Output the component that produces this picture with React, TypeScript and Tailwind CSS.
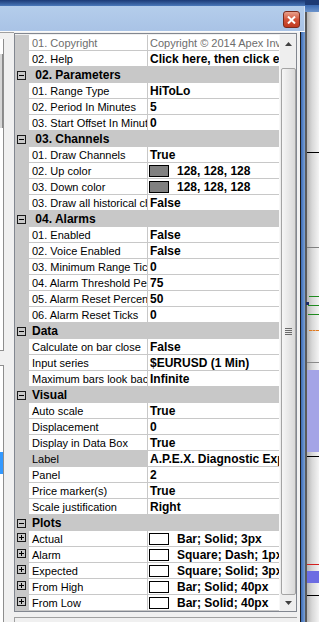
import React from 'react';

type Row =
  | { kind: 'cat'; label: string }
  | {
      kind: 'prop';
      name: string;
      value: string;
      readOnly?: boolean;
      swatch?: string;
      plus?: boolean;
      selected?: boolean;
    };

const rows: Row[] = [
  { kind: 'prop', name: '01. Copyright', value: 'Copyright © 2014 Apex Investing', readOnly: true },
  { kind: 'prop', name: '02. Help', value: 'Click here, then click ellipsis' },
  { kind: 'cat', label: ' 02. Parameters' },
  { kind: 'prop', name: '01. Range Type', value: 'HiToLo' },
  { kind: 'prop', name: '02. Period In Minutes', value: '5' },
  { kind: 'prop', name: '03. Start Offset In Minutes', value: '0' },
  { kind: 'cat', label: ' 03. Channels' },
  { kind: 'prop', name: '01. Draw Channels', value: 'True' },
  { kind: 'prop', name: '02. Up color', value: '128, 128, 128', swatch: '#808080' },
  { kind: 'prop', name: '03. Down color', value: '128, 128, 128', swatch: '#808080' },
  { kind: 'prop', name: '03. Draw all historical channels', value: 'False' },
  { kind: 'cat', label: ' 04. Alarms' },
  { kind: 'prop', name: '01. Enabled', value: 'False' },
  { kind: 'prop', name: '02. Voice Enabled', value: 'False' },
  { kind: 'prop', name: '03. Minimum Range Ticks', value: '0' },
  { kind: 'prop', name: '04. Alarm Threshold Percent', value: '75' },
  { kind: 'prop', name: '05. Alarm Reset Percent', value: '50' },
  { kind: 'prop', name: '06. Alarm Reset Ticks', value: '0' },
  { kind: 'cat', label: 'Data' },
  { kind: 'prop', name: 'Calculate on bar close', value: 'False' },
  { kind: 'prop', name: 'Input series', value: '$EURUSD (1 Min)' },
  { kind: 'prop', name: 'Maximum bars look back', value: 'Infinite' },
  { kind: 'cat', label: 'Visual' },
  { kind: 'prop', name: 'Auto scale', value: 'True' },
  { kind: 'prop', name: 'Displacement', value: '0' },
  { kind: 'prop', name: 'Display in Data Box', value: 'True' },
  { kind: 'prop', name: 'Label', value: 'A.P.E.X. Diagnostic Expected Range', selected: true },
  { kind: 'prop', name: 'Panel', value: '2' },
  { kind: 'prop', name: 'Price marker(s)', value: 'True' },
  { kind: 'prop', name: 'Scale justification', value: 'Right' },
  { kind: 'cat', label: 'Plots' },
  { kind: 'prop', name: 'Actual', value: 'Bar; Solid; 3px', swatch: '#ffffff', plus: true },
  { kind: 'prop', name: 'Alarm', value: 'Square; Dash; 1px', swatch: '#ffffff', plus: true },
  { kind: 'prop', name: 'Expected', value: 'Square; Solid; 3px', swatch: '#ffffff', plus: true },
  { kind: 'prop', name: 'From High', value: 'Bar; Solid; 40px', swatch: '#ffffff', plus: true },
  { kind: 'prop', name: 'From Low', value: 'Bar; Solid; 40px', swatch: '#ffffff', plus: true },
];

function Box({ minus }: { minus: boolean }) {
  return (
    <svg width="9" height="9" viewBox="0 0 9 9" className="block">
      <rect x="0.5" y="0.5" width="8" height="8" fill="none" stroke="#1a1a1a" />
      <line x1="2" y1="4.5" x2="7" y2="4.5" stroke="#000" />
      {!minus && <line x1="4.5" y1="2" x2="4.5" y2="7" stroke="#000" />}
    </svg>
  );
}

function GridRow({ row }: { row: Row }) {
  if (row.kind === 'cat') {
    return (
      <div className="flex h-[16px] bg-[#c8c8c8]">
        <div className="w-[14px] flex items-center pl-[2px] pt-[1px]">
          <Box minus />
        </div>
        <div className="pl-[3px] pt-[1px] font-bold text-[12px] text-black leading-[15px] whitespace-pre">
          {row.label}
        </div>
      </div>
    );
  }
  return (
    <div className="flex h-[16px]">
      <div className="w-[14px] bg-[#c8c8c8] flex items-start pt-[2px] pl-[2px]">
        {row.plus && <Box minus={false} />}
      </div>
      <div
        className={`w-[118px] border-b border-[#c8c8c8] pl-[3px] pt-[1px] leading-[15px] whitespace-nowrap overflow-hidden ${
          row.selected ? 'bg-[#c8c8c8]' : 'bg-white'
        } ${row.readOnly ? 'text-[#6d6d6d]' : 'text-black'}`}
      >
        {row.name}
      </div>
      <div className="w-[1px] bg-[#c8c8c8]" />
      <div
        className={`w-[131px] bg-white border-b border-[#c8c8c8] flex items-start whitespace-nowrap overflow-hidden leading-[15px] pl-[2px] ${
          row.readOnly ? 'text-[#6d6d6d] pt-[1px]' : 'text-black font-bold text-[12px] pt-[1px]'
        }`}
      >
        {row.swatch && (
          <span
            className="mt-[1px] ml-[-1px] mr-[8px] w-[20px] h-[12px] border border-black shrink-0"
            style={{ backgroundColor: row.swatch }}
          />
        )}
        <span>{row.value}</span>
      </div>
    </div>
  );
}

function ScrollBar() {
  return (
    <div className="w-[17px] bg-[#eeeeee] flex flex-col items-center border-l border-[#f8f8f8]">
      <div className="h-[17px] w-full flex items-center justify-center">
        <svg width="7" height="4" viewBox="0 0 7 4">
          <path d="M0 4 L3.5 0 L7 4 Z" fill="#404040" />
        </svg>
      </div>
      <div className="h-[16px]" />
      <div className="flex-1 w-[15px] rounded-[2px] border border-[#a4a4a4] bg-gradient-to-r from-[#f6f6f6] via-[#e8e8e8] to-[#d8d8d8] flex items-center justify-center">
        <div className="flex flex-col gap-[1px]">
          <div className="w-[7px] h-[1px] bg-[#6a6a6a]" />
          <div className="w-[7px] h-[1px] bg-[#6a6a6a]" />
          <div className="w-[7px] h-[1px] bg-[#6a6a6a]" />
          <div className="w-[7px] h-[1px] bg-[#6a6a6a]" />
        </div>
      </div>
      <div className="h-[16px] w-full flex items-center justify-center">
        <svg width="7" height="4" viewBox="0 0 7 4">
          <path d="M0 0 L3.5 4 L7 0 Z" fill="#404040" />
        </svg>
      </div>
    </div>
  );
}

function Chart() {
  const lines: { top: number; h: number; color: string; left?: number }[] = [
    { top: 152, h: 1, color: '#000000' },
    { top: 247, h: 1, color: '#808080' },
    { top: 296, h: 1, color: '#208a20', left: 4 },
    { top: 305, h: 1, color: '#208a20', left: 3 },
    { top: 314, h: 1, color: '#208a20', left: 3 },
    { top: 362, h: 1, color: '#8a8a8a' },
    { top: 370, h: 82, color: '#a4a4e6' },
    { top: 456, h: 1, color: '#000000' },
    { top: 564, h: 1, color: '#d42020' },
    { top: 571, h: 12, color: '#6c6ce2' },
    { top: 595, h: 1, color: '#000000' },
  ];
  return (
    <div className="relative w-[14px] h-full bg-gradient-to-r from-[#a8a8a8] via-[#d8d8d8] to-[#f4f4f4]">
      <div className="absolute left-0 top-0 w-full h-[5px] bg-[#1d3a74]" />
      <div className="absolute left-0 top-[5px] w-full h-[7px] bg-gradient-to-b from-[#3a68b0] to-[#6c94cc]" />
      <div className="absolute left-0 top-[12px] w-[2px] h-[610px] bg-[#5a5a5a]" />
      {lines.map((l, i) => (
        <div
          key={i}
          className="absolute right-0"
          style={{ top: l.top, height: l.h, left: l.left ?? 2, backgroundColor: l.color }}
        />
      ))}
      <div className="absolute left-[1px] top-[302px] w-[3px] h-[3px] bg-[#1a2a6a]" />
      <div className="absolute left-[4px] right-0 top-[330px] h-[1px] border-t border-dashed border-[#e07a20]" />
    </div>
  );
}

export default function App() {
  return (
    <div
      className="w-[319px] h-[622px] overflow-hidden flex bg-[#f0f0f0] text-[11px]"
      style={{ fontFamily: '"Liberation Sans", Arial, sans-serif' }}
    >
      <div className="w-[305px] h-full flex flex-col">
        <div className="h-[6px] bg-gradient-to-b from-[#1c3a76] to-[#4a78ba]" />
        <div className="h-[25px] bg-gradient-to-b from-[#b4cdeb] to-[#a9c3e6] flex justify-end items-start pr-[4px] pt-[5px] border-r border-[#d4e2f3]">
          <div className="w-[17px] h-[17px] rounded-[3px] border border-[#7a2a1c] bg-gradient-to-b from-[#e8a08c] via-[#d2533a] to-[#c0391f] flex items-center justify-center">
            <svg width="9" height="8" viewBox="0 0 9 8">
              <path d="M1 0.5 L8 7.5 M8 0.5 L1 7.5" stroke="#ffffff" strokeWidth="2" />
            </svg>
          </div>
        </div>
        <div className="flex-1 flex border-t border-[#fbfbfb]">
          {/* left strip */}
          <div className="w-[14px] flex flex-col">
            <div className="h-[1px] bg-[#a0a0a0]" />
            <div className="flex-1 flex">
              <div className="w-[4px] flex flex-col">
                <div className="h-[6px]" />
                <div className="h-[312px] bg-white border-r border-b border-[#8e8e8e] flex flex-col">
                  <div className="h-[15px]" />
                  <div className="h-[74px] w-[3px] bg-[#d6d6d6] border-r border-[#8a8a8a]" />
                </div>
                <div className="h-[14px]" />
                <div className="flex-1 bg-white border-t border-r border-[#8e8e8e] flex flex-col">
                  <div className="h-[86px]" />
                  <div className="h-[22px] bg-[#3399ff]" />
                </div>
              </div>
              <div className="flex-1" />
            </div>
          </div>
          {/* grid */}
          <div className="flex flex-col">
            <div className="h-[1px]" />
            <div className="border border-[#828790] flex flex-col">
              <div className="h-[1px] bg-[#f0f0f0]" />
              <div className="flex">
                <div className="flex flex-col">
                  {rows.map((r, i) => (
                    <GridRow key={i} row={r} />
                  ))}
                </div>
                <ScrollBar />
              </div>
            </div>
            <div className="h-[5px]" />
            <div className="flex-1 border-t border-l border-[#a0a0a0] bg-[#f0f0f0]" />
          </div>
          {/* right frame */}
          <div className="w-[3px] bg-[#f2f2f2]" />
          <div className="w-[1px] bg-[#1a1a1a]" />
          <div className="w-[4px] bg-gradient-to-r from-[#3a6ab4] to-[#7ca2d6]" />
        </div>
      </div>
      <Chart />
    </div>
  );
}
